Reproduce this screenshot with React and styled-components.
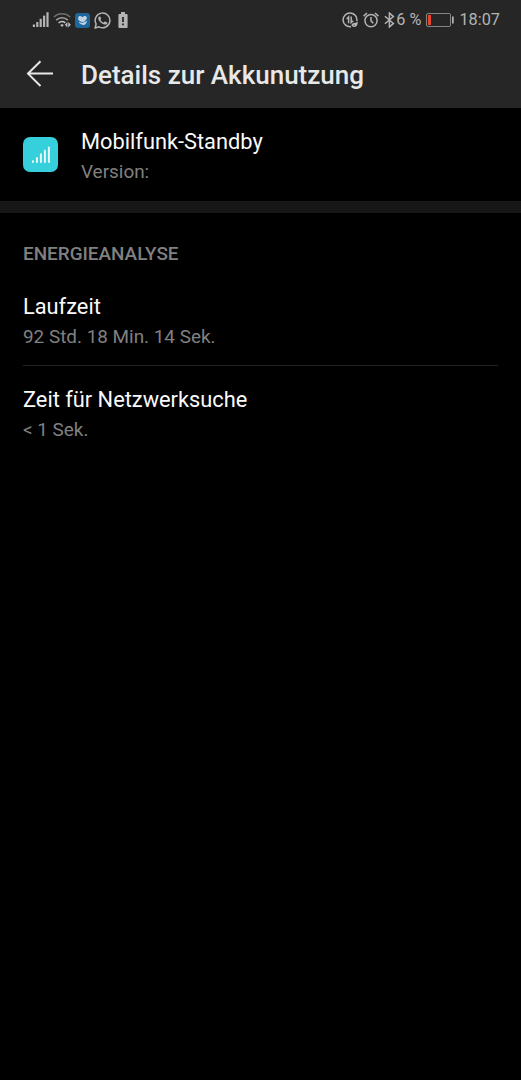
import React from 'react';
import styled, { createGlobalStyle } from 'styled-components';

const GlobalStyle = createGlobalStyle`
  * {
    box-sizing: border-box;
  }

  body {
    margin: 0;
    background-color: #000;
    font-family: Roboto, sans-serif;
  }
`;

const Container = styled('div')`
  width: 100%;
  height: 1080px;
  background-color: #000;
  overflow: hidden;
`;

const Header = styled('header')`
  height: 108px;
  background-color: #262626;
`;

const StatusBar = styled('div')`
  height: 40px;
  padding: 0 21px 0 32px;
  display: flex;
  justify-content: space-between;
  align-items: center;
  color: #b4b4b4;
`;

const StatusGroup = styled('div')`
  display: flex;
  align-items: center;
  gap: ${({ $gap }) => $gap}px;

  svg {
    display: block;
    flex-shrink: 0;
  }
`;

const StatusText = styled('span')`
  font-size: 16.3px;
  line-height: 20px;
  white-space: nowrap;
`;

const TitleBar = styled('div')`
  height: 68px;
  padding: 0 23px 0 26px;
  display: flex;
  align-items: center;
  gap: 27px;
`;

const BackButton = styled('button')`
  width: 28px;
  height: 28px;
  padding: 0;
  border: 0;
  background: none;
  color: #e8e8e8;
  cursor: pointer;

  svg {
    display: block;
  }
`;

const Title = styled('h1')`
  margin: 0;
  padding-top: 2px;
  color: #e8e8e8;
  font-size: 26px;
  font-weight: 500;
  line-height: 32px;
  white-space: nowrap;
`;

const AppInfo = styled('section')`
  height: 93px;
  padding: 0 23px;
  display: flex;
  align-items: center;
  gap: 23px;
`;

const AppIcon = styled('div')`
  width: 35px;
  height: 35px;
  border-radius: 7px;
  background-color: #36d0dc;

  svg {
    display: block;
  }
`;

const AppText = styled('div')`
  padding-top: 5px;
`;

const Divider = styled('div')`
  height: 12px;
  background-color: #171717;
`;

const Section = styled('section')`
  padding: 28px 23px 0;
`;

const SectionTitle = styled('h2')`
  margin: 0 0 13px;
  color: #808080;
  font-size: 18.9px;
  font-weight: 500;
  line-height: 26px;
`;

const Row = styled('div')`
  height: ${({ $last }) => ($last ? 93 : 86)}px;
  padding-top: ${({ $last }) => ($last ? 19 : 12)}px;
  border-bottom: ${({ $last }) => ($last ? 'none' : '1px solid #222')};
`;

const Label = styled('div')`
  color: #fafafa;
  font-size: 21.8px;
  line-height: 30px;
`;

const Value = styled('div')`
  color: #808080;
  font-size: 18.9px;
  line-height: 30px;
`;

const SignalIcon = () => (
  <svg width="17" height="16" viewBox="0 0 17 16" fill="currentColor">
    <rect x="0.8" y="12.5" width="2.2" height="2.5" />
    <rect x="4.2" y="10" width="2.2" height="5" />
    <rect x="7.6" y="6.8" width="2.2" height="8.2" />
    <rect x="11" y="3.6" width="2.2" height="11.4" />
    <rect x="14.4" y="0.2" width="2.2" height="14.8" />
  </svg>
);

const WifiIcon = () => (
  <svg width="18" height="16" viewBox="0 0 18 16" fill="none">
    <path d="M0.8 5A12 12 0 0 1 17.2 5" stroke="#6c6c6c" strokeWidth="1.5" />
    <path d="M3.2 8.1A8.2 8.2 0 0 1 14.8 8.1" stroke="#a0a0a0" strokeWidth="1.6" />
    <path d="M5.6 11A4.9 4.9 0 0 1 12.2 10.9" stroke="#c4c4c4" strokeWidth="1.6" />
    <path d="M7.2 13Q9 11.7 10.8 13L9 15z" fill="#c4c4c4" />
    <path d="M14.4 10V15.6L11.9 12.8zM15.3 10V15.6L17.8 12.8z" fill="#c4c4c4" />
  </svg>
);

const HealthIcon = () => (
  <svg width="15" height="15" viewBox="0 0 15 15">
    <rect width="15" height="15" rx="3" fill="#1d679c" />
    <path d="M3.6 7.2C2.2 4.4 4.2 2.3 6 3.3L7.4 4.3L8.7 3.3C10.7 2.1 12.6 3.8 11.6 6L9 9L6 8.8z" fill="#c2d3e0" />
    <path d="M3.4 8.6Q5.2 9.8 7.6 9.8Q10 9.4 12 7.4Q11.6 11.2 8.8 11.9Q5.4 12.2 3.4 8.6" fill="#c2d3e0" />
  </svg>
);

const WhatsappIcon = () => (
  <svg width="17" height="17" viewBox="0 0 24 24" fill="currentColor">
    <path d="M17.5 14.4c-.3-.15-1.76-.87-2.03-.97-.27-.1-.47-.15-.67.15-.2.3-.77.97-.94 1.16-.17.2-.35.22-.64.08-.3-.15-1.26-.46-2.39-1.48-.88-.79-1.48-1.76-1.65-2.06-.17-.3-.02-.46.13-.6.13-.14.3-.35.45-.53.15-.17.2-.3.3-.5.1-.2.05-.37-.03-.52-.07-.15-.67-1.61-.91-2.2-.24-.58-.49-.5-.67-.51h-.57c-.2 0-.52.07-.79.37C6.8 7.1 6 7.8 6 9.3c0 1.5 1.1 2.9 1.25 3.1.15.2 2.1 3.2 5.1 4.5 3 1.15 3.6.9 4.2.85.65-.06 1.9-.77 2.15-1.5.26-.73.26-1.35.18-1.48-.08-.13-.28-.2-.58-.35z" />
    <path d="M1.5 22.5L3 16.9A10.4 10.4 0 1 1 7 20.9z" fill="none" stroke="currentColor" strokeWidth="2.1" strokeLinejoin="round" />
  </svg>
);

const BatteryAlertIcon = () => (
  <svg width="13" height="16" viewBox="-3 0 13 16">
    <path d="M3 0H7V2H8.6Q9.6 2 9.6 3V15Q9.6 16 8.6 16H1.4Q0.4 16 0.4 15V3Q0.4 2 1.4 2H3z" fill="#b4b4b4" />
    <path d="M4.1 5H5.9V10H4.1zM4.1 11.5H5.9V13.2H4.1z" fill="#262626" />
  </svg>
);

const DataSaverIcon = () => (
  <svg width="16" height="16" viewBox="0 0 16 16" fill="none" stroke="currentColor" strokeWidth="1.5">
    <path d="M14.8 9A6.9 6.9 0 1 0 9 14.7" />
    <path d="M6.6 11.3V5L4.7 7M9.2 4.5V10.6L11.2 8.7" />
    <path d="M15.6 9.2C16 12.8 14.6 15.3 11.2 15.1C9.2 14.8 9 12.2 11 11.3C12.5 10.7 14.4 10.8 15.6 9.2z" fill="currentColor" stroke="none" />
    <path d="M10 15.2L13 12.6" stroke="#262626" strokeWidth="0.5" />
  </svg>
);

const AlarmIcon = () => (
  <svg width="16" height="16" viewBox="0 0 16 16" fill="none" stroke="currentColor" strokeWidth="1.5">
    <circle cx="8" cy="8.6" r="6.1" />
    <path d="M8 5.1V8.9L10.3 11.2M0.6 4.1L4 1M15.4 4.1L12 1" />
  </svg>
);

const BluetoothIcon = () => (
  <svg width="12" height="16" viewBox="0 0 12 16" fill="none" stroke="currentColor" strokeWidth="1.5">
    <path d="M0.9 4.2L9.4 11.4L5.4 15V1L9.4 4.6L0.9 11.8" />
  </svg>
);

const BatteryIcon = () => (
  <svg width="28" height="14" viewBox="0 0 28 14">
    <rect x="0.5" y="0.5" width="24" height="13" rx="1.5" fill="none" stroke="#858585" />
    <rect x="2" y="2" width="3" height="10" fill="#e8452c" />
    <rect x="26" y="3.5" width="1.7" height="7" fill="#b4b4b4" />
  </svg>
);

const BackIcon = () => (
  <svg width="28" height="28" viewBox="0 0 28 28" fill="none" stroke="currentColor" strokeWidth="2">
    <path d="M14.5 1.2L2 13.6L14.5 26M2 13.6H27" />
  </svg>
);

const StandbyIcon = () => (
  <svg width="35" height="35" viewBox="0 0 35 35" fill="none" stroke="#e9fafb" strokeWidth="2" strokeLinecap="round">
    <path d="M9.9 24.2V25M13.9 21V25M17.9 17.2V25M21.9 13.8V25M25.9 10.5V25" />
  </svg>
);

const details = [
  { label: 'Laufzeit', value: '92 Std. 18 Min. 14 Sek.' },
  { label: 'Zeit für Netzwerksuche', value: '< 1 Sek.' },
];

const BatteryDetailPage = () => {
  return (
    <Container>
      <GlobalStyle />
      <Header>
        <StatusBar>
          <StatusGroup $gap={4}>
            <SignalIcon />
            <WifiIcon />
            <HealthIcon />
            <WhatsappIcon />
            <BatteryAlertIcon />
          </StatusGroup>
          <StatusGroup $gap={5}>
            <DataSaverIcon />
            <AlarmIcon />
            <StatusGroup $gap={0}>
              <BluetoothIcon />
              <StatusText>6 %</StatusText>
            </StatusGroup>
            <BatteryIcon />
            <StatusText>18:07</StatusText>
          </StatusGroup>
        </StatusBar>
        <TitleBar>
          <BackButton aria-label="Zurück">
            <BackIcon />
          </BackButton>
          <Title>Details zur Akkunutzung</Title>
        </TitleBar>
      </Header>
      <AppInfo>
        <AppIcon>
          <StandbyIcon />
        </AppIcon>
        <AppText>
          <Label>Mobilfunk-Standby</Label>
          <Value>Version:</Value>
        </AppText>
      </AppInfo>
      <Divider />
      <Section>
        <SectionTitle>ENERGIEANALYSE</SectionTitle>
        {details.map((item, index) => (
          <Row key={item.label} $last={index === details.length - 1}>
            <Label>{item.label}</Label>
            <Value>{item.value}</Value>
          </Row>
        ))}
      </Section>
    </Container>
  );
};

export default BatteryDetailPage;
